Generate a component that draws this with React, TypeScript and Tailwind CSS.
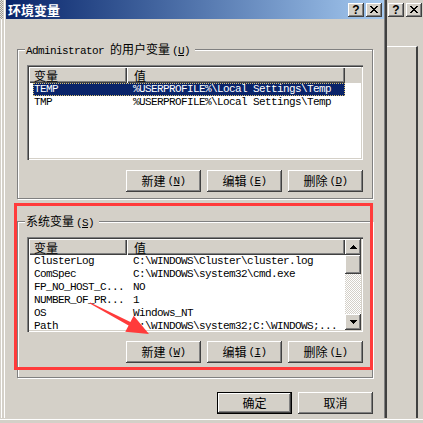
import React from "react";
import clsx from "clsx";

const mono = "font-['Liberation_Mono','Noto_Sans_CJK_SC',monospace] text-[11px] tracking-[-0.6px]";
const cjk = "font-['Noto_Sans_CJK_SC',sans-serif] text-[12px] tracking-normal";
const raised =
  "bg-[#d4d0c8] shadow-[inset_-1px_-1px_0_#404040,inset_1px_1px_0_#fff,inset_-2px_-2px_0_#808080]";
const head =
  "shadow-[inset_1px_1px_0_#fff,inset_-1px_-1px_0_#404040,inset_-2px_-2px_0_#808080]";
const dither =
  "bg-[repeating-conic-gradient(#d4d0c8_0_25%,#fff_0_50%)] bg-[length:2px_2px]";

const userVars = [
  ["TEMP", "%USERPROFILE%\\Local Settings\\Temp"],
  ["TMP", "%USERPROFILE%\\Local Settings\\Temp"],
];

const sysVars = [
  ["ClusterLog", "C:\\WINDOWS\\Cluster\\cluster.log"],
  ["ComSpec", "C:\\WINDOWS\\system32\\cmd.exe"],
  ["FP_NO_HOST_C...", "NO"],
  ["NUMBER_OF_PR...", "1"],
  ["OS", "Windows_NT"],
  ["Path", "C:\\WINDOWS\\system32;C:\\WINDOWS;..."],
];

function Cn({ children }: { children: React.ReactNode }) {
  return <span className={cjk}>{children}</span>;
}

// mnemonic like (N) with underlined key
function Mn({ c }: { c: string }) {
  return (
    <span className={clsx(mono, "ml-[2px]")}>
      (<span className="underline underline-offset-[1px]">{c}</span>)
    </span>
  );
}

function Btn({ label, k, def }: { label: string; k?: string; def?: boolean }) {
  return (
    <div
      className={clsx(
        "w-[75px] h-[22px] flex items-center justify-center leading-[14px] text-black",
        raised,
        def && "border border-black"
      )}
    >
      <Cn>{label}</Cn>
      {k && <Mn c={k} />}
    </div>
  );
}

function CapBtn({ kind }: { kind: "help" | "close" }) {
  return (
    <div className={clsx("w-[16px] h-[14px] flex items-center justify-center", raised)}>
      {kind === "help" ? (
        <span className="font-['Liberation_Sans',sans-serif] font-bold text-[12px] leading-[12px] text-black">
          ?
        </span>
      ) : (
        <svg width="8" height="7" viewBox="0 0 8 7" shapeRendering="crispEdges">
          <path d="M0 0h2l2 2.5 2-2.5h2l-3 3.5 3 3.5h-2l-2-2.5-2 2.5h-2l3-3.5z" fill="#000" />
        </svg>
      )}
    </div>
  );
}

function ScrollBar() {
  return (
    <div className="w-[16px] flex flex-col shrink-0">
      <div className={clsx("h-[16px] flex items-center justify-center", raised)}>
        <svg width="7" height="4" shapeRendering="crispEdges">
          <polygon points="3.5,0 7,4 0,4" fill="#000" />
        </svg>
      </div>
      <div className={clsx("h-[19px]", raised)} />
      <div className={clsx("flex-1", dither)} />
      <div className={clsx("h-[16px] flex items-center justify-center", raised)}>
        <svg width="7" height="4" shapeRendering="crispEdges">
          <polygon points="0,0 7,0 3.5,4" fill="#000" />
        </svg>
      </div>
    </div>
  );
}

function ListView({ rows, sel, scroll }: { rows: string[][]; sel?: number; scroll?: boolean }) {
  return (
    <div className="w-[336px] h-[95px] p-[2px] flex bg-white shadow-[inset_1px_1px_0_#808080,inset_2px_2px_0_#404040,inset_-1px_-1px_0_#fff,inset_-2px_-2px_0_#d4d0c8]">
      <div className="flex-1 min-w-0 flex flex-col overflow-hidden">
        <div className="flex h-[16px] shrink-0 bg-[#d4d0c8] leading-[16px] text-black">
          <div className={clsx("w-[98px] pl-[5px]", head)}>
            <Cn>变量</Cn>
          </div>
          <div className={clsx("w-[218px] pl-[7px]", head)}>
            <Cn>值</Cn>
          </div>
          <div className="flex-1 shadow-[inset_0_1px_0_#fff]" />
        </div>
        {rows.map(([n, v], i) => (
          <div key={n} className="h-[13px] shrink-0 pl-[4px] flex">
            <div
              className={clsx(
                "w-[312px] flex leading-[13px]",
                mono,
                i === sel
                  ? "bg-[#0a246a] text-white outline-1 outline-dotted outline-[#d8c070] -outline-offset-1"
                  : "text-black"
              )}
            >
              <span className="w-[94px] pl-[1px] whitespace-pre overflow-hidden">{n}</span>
              <span className="flex-1 pl-[6px] whitespace-pre overflow-hidden">{v}</span>
            </div>
          </div>
        ))}
      </div>
      {scroll && <ScrollBar />}
    </div>
  );
}

function Group({
  title,
  k,
  className,
  children,
}: {
  title: React.ReactNode;
  k: string;
  className?: string;
  children: React.ReactNode;
}) {
  return (
    <fieldset
      className={clsx(
        "ml-[11px] w-[356px] border border-[#808080] shadow-[inset_1px_1px_0_#fff,1px_1px_0_#fff] px-[9px] pt-[7px]",
        className
      )}
    >
      <legend className="ml-[-2px] pl-[1px] pr-[5px] bg-[#d4d0c8] leading-[14px] text-black">
        {title}
        <Mn c={k} />
      </legend>
      {children}
    </fieldset>
  );
}

export default function App() {
  return (
    <div className="relative w-[423px] h-[423px] overflow-hidden bg-[#d4d0c8] flex flex-col">
      <div className="flex h-[418px]">
        {/* window behind, left edge */}
        <div className="w-[3px] flex flex-col">
          <div className="h-[19px] bg-[repeating-conic-gradient(#9c9a94_0_25%,#e4e2dc_0_50%)] bg-[length:2px_2px]" />
          <div className="flex-1 flex">
            <div className="ml-[1px] w-px bg-white" />
          </div>
        </div>

        {/* dialog */}
        <div className="w-[384px] px-[3px] flex flex-col shadow-[inset_1px_0_0_#d4d0c8,inset_2px_0_0_#fff,inset_-2px_0_0_#404040,inset_-3px_0_0_#808080]">
          <div className="h-[19px] shrink-0 flex items-center gap-[2px] pl-[2px] pr-[2px] bg-linear-to-r from-[#0a246a] to-[#a6caf0]">
            <span className="flex-1 text-white font-bold text-[13px] leading-[15px] font-['Noto_Sans_CJK_SC',sans-serif]">
              环境变量
            </span>
            <CapBtn kind="help" />
            <CapBtn kind="close" />
          </div>

          <Group
            title={
              <>
                <span className={mono}>Administrator </span>
                <Cn>的用户变量</Cn>
              </>
            }
            k="U"
            className="mt-[22px] pb-[6px]"
          >
            <ListView rows={userVars} sel={0} />
            <div className="mt-[10px] flex justify-end gap-[6px]">
              <Btn label="新建" k="N" />
              <Btn label="编辑" k="E" />
              <Btn label="删除" k="D" />
            </div>
          </Group>

          <Group title={<Cn>系统变量</Cn>} k="S" className="mt-[14px] pb-[14px]">
            <ListView rows={sysVars} scroll />
            <div className="mt-[9px] flex justify-end gap-[6px]">
              <Btn label="新建" k="W" />
              <Btn label="编辑" k="I" />
              <Btn label="删除" k="L" />
            </div>
          </Group>

          <div className="mt-[14px] flex justify-end gap-[6px] pr-[11px]">
            <Btn label="确定" def />
            <Btn label="取消" />
          </div>
        </div>

        {/* window behind, right */}
        <div className="w-[36px] flex flex-col">
          <div className="h-[19px] shrink-0 flex items-center gap-[2px] pl-[1px]">
            <CapBtn kind="help" />
            <CapBtn kind="close" />
          </div>
          <div className="mt-[27px] flex-1 w-[31px] border-t border-white border-r-2 border-r-[#404040]" />
        </div>
      </div>
      <div className="h-[5px] pt-[1px]">
        <div className="h-px bg-white" />
      </div>

      {/* red annotation */}
      <div className="absolute left-[14px] top-[203px] w-[359px] h-[167px] border-[3px] border-[#ff3b3b] pointer-events-none" />
      <svg className="absolute inset-0 pointer-events-none" width="423" height="423">
        <polygon
          points="90.2,302.4 130.4,322 133.7,315.8 149,334 125.3,331.8 128.6,325.6 89.8,303.6"
          fill="#ff3b3b"
        />
      </svg>
    </div>
  );
}
